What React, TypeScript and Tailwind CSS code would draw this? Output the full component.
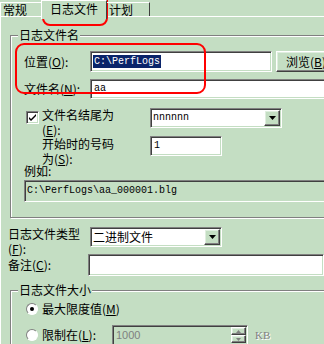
import React from "react";

const BG = "bg-[#c4dec3]";
const SUNKEN =
  "border border-t-[#808080] border-l-[#808080] border-b-white border-r-white shadow-[inset_1px_1px_0_#404040,inset_-1px_-1px_0_#c4dec3]";
const RAISED =
  "border border-t-white border-l-white border-b-[#404040] border-r-[#404040] shadow-[inset_-1px_-1px_0_#808080,inset_1px_1px_0_#dfeedf]";
const ETCHED = "border border-[#808080] shadow-[inset_1px_1px_0_#fff,1px_1px_0_#fff]";
const MONO = "font-['Liberation_Mono',monospace] text-[10px]";

function DropArrow() {
  return (
    <div className={`flex h-[16px] w-[16px] shrink-0 items-center justify-center ${RAISED} ${BG}`}>
      <svg width="7" height="4" viewBox="0 0 7 4">
        <path d="M0 0h7L3.5 4z" fill="#000" />
      </svg>
    </div>
  );
}

function Combo({ width, text, mono }: { width: string; text: string; mono?: boolean }) {
  return (
    <div className={`flex h-[20px] ${width} items-center justify-between bg-white pl-[2px] pr-[1px] ${SUNKEN}`}>
      <span className={mono ? MONO : ""}>{text}</span>
      <DropArrow />
    </div>
  );
}

function Radio({ checked }: { checked?: boolean }) {
  return (
    <div className="flex h-[12px] w-[12px] shrink-0 items-center justify-center rounded-full border border-t-[#808080] border-l-[#808080] border-b-white border-r-white bg-white">
      {checked && <div className="h-[4px] w-[4px] rounded-full bg-black" />}
    </div>
  );
}

export default function App() {
  return (
    <div
      className={`relative h-[344px] w-[324px] overflow-hidden ${BG} font-['Noto_Sans_CJK_SC',sans-serif] text-[12px] leading-[14px] text-black`}
    >
      {/* tabs */}
      <div className="relative z-10 flex h-[16px] items-start">
        <div className="mt-[2px] flex h-[14px] w-[41px] items-center border-l border-t border-white pl-[2px]">
          常规
        </div>
        <div className={`flex h-[19px] w-[66px] justify-center border-l border-t border-r border-l-white border-t-white border-r-[#404040] pt-[1px] ${BG}`}>
          日志文件
        </div>
        <div className="mt-[2px] flex h-[14px] w-[43px] items-center border-t border-r border-t-white border-r-[#404040] pl-[2px]">
          计划
        </div>
      </div>

      {/* page */}
      <div className="border-l border-t border-white">
        {/* 日志文件名 */}
        <div className={`relative ml-[9px] mt-[18px] h-[183px] w-[340px] ${ETCHED} pl-[13px]`}>
          <div className={`absolute -top-[8px] left-[7px] px-[1px] ${BG}`}>日志文件名</div>

          <div className="mt-[15px] flex h-[21px] items-center">
            <div className="w-[66px]">
              位置(<u>O</u>):
            </div>
            <div className={`flex h-[21px] w-[182px] items-center bg-white pl-[2px] ${SUNKEN}`}>
              <span className={`${MONO} bg-[#0a246a] px-[1px] leading-[13px] text-white`}>C:\PerfLogs</span>
            </div>
            <div className={`ml-[4px] flex h-[21px] w-[60px] items-center pl-[9px] ${RAISED} ${BG}`}>
              浏览(<u>B</u>)
            </div>
          </div>

          <div className="mt-[7px] flex h-[20px] items-center">
            <div className="w-[66px]">
              文件名(<u>N</u>):
            </div>
            <div className={`flex h-[20px] w-[240px] items-center bg-white pl-[3px] ${SUNKEN}`}>
              <span className={MONO}>aa</span>
            </div>
          </div>

          <div className="mt-[9px] flex h-[20px] items-start">
            <div className={`ml-[2px] mt-[3px] flex h-[13px] w-[13px] shrink-0 items-center justify-center bg-white ${SUNKEN}`}>
              <svg width="9" height="9" viewBox="0 0 9 9">
                <path d="M1 4l2 2 5-5v2L3 8 1 6z" fill="#000" />
              </svg>
            </div>
            <div className="-mt-[1px] ml-[3px] w-[108px] leading-[15px]">
              文件名结尾为
              <br />
              (<u>E</u>):
            </div>
            <Combo width="w-[132px]" text="nnnnnn" mono />
          </div>

          <div className="mt-[8px] flex h-[20px] items-start">
            <div className="ml-[18px] w-[108px] leading-[15px]">
              开始时的号码
              <br />
              为(<u>S</u>):
            </div>
            <div className={`flex h-[20px] w-[72px] items-center bg-white pl-[3px] ${SUNKEN}`}>
              <span className={MONO}>1</span>
            </div>
          </div>

          <div className="mt-[8px] h-[14px]">例如:</div>
          <div className={`mt-[2px] flex h-[22px] w-[320px] items-center pl-[2px] ${SUNKEN}`}>
            <span className={MONO}>C:\PerfLogs\aa_000001.blg</span>
          </div>
        </div>

        {/* 日志文件类型 */}
        <div className="mt-[8px] flex h-[21px] items-start pl-[7px]">
          <div className="w-[82px] leading-[15px]">
            日志文件类型
            <br />
            (<u>F</u>):
          </div>
          <div className="mt-[1px]">
            <Combo width="w-[132px]" text="二进制文件" />
          </div>
        </div>

        <div className="mt-[7px] flex h-[22px] items-center pl-[7px]">
          <div className="w-[82px]">
            备注(<u>C</u>):
          </div>
          <div className={`h-[22px] w-[240px] bg-white ${SUNKEN}`} />
        </div>

        {/* 日志文件大小 */}
        <div className={`relative ml-[9px] mt-[14px] h-[80px] w-[340px] ${ETCHED} pl-[15px]`}>
          <div className={`absolute -top-[8px] left-[7px] px-[1px] ${BG}`}>日志文件大小</div>

          <div className="mt-[11px] flex h-[13px] items-center">
            <Radio checked />
            <div className="ml-[4px]">
              最大限度值(<u>M</u>)
            </div>
          </div>

          <div className="mt-[10px] flex h-[20px] items-center">
            <Radio />
            <div className="ml-[4px] w-[70px]">
              限制在(<u>L</u>):
            </div>
            <div className="flex h-[20px] w-[136px] items-center justify-between border border-t-[#808080] border-l-[#808080] border-b-white border-r-white pl-[3px] pr-[1px] shadow-[inset_1px_1px_0_#404040]">
              <span className="font-['Liberation_Sans',sans-serif] text-[11px] text-[#808080]">1000</span>
              <div className="flex flex-col self-start pt-[1px]">
                <div className={`flex h-[8px] w-[15px] items-center justify-center ${RAISED} ${BG}`}>
                  <svg width="5" height="3" viewBox="0 0 5 3">
                    <path d="M2.5 0L5 3H0z" fill="#808080" />
                  </svg>
                </div>
                <div className={`flex h-[8px] w-[15px] items-center justify-center ${RAISED} ${BG}`}>
                  <svg width="5" height="3" viewBox="0 0 5 3">
                    <path d="M0 0h5L2.5 3z" fill="#808080" />
                  </svg>
                </div>
              </div>
            </div>
            <div className="ml-[7px] font-['Liberation_Serif',serif] text-[11px] text-[#808080] [text-shadow:1px_1px_0_#fff]">
              KB
            </div>
          </div>
        </div>
      </div>

      {/* red annotations */}
      <div className="pointer-events-none absolute left-[42px] top-[-8px] h-[34px] w-[66px] rounded-[8px] border-2 border-[#ff0000]" />
      <div className="pointer-events-none absolute left-[15px] top-[43px] h-[51px] w-[191px] rounded-[9px] border-2 border-[#ff0000]" />
    </div>
  );
}
